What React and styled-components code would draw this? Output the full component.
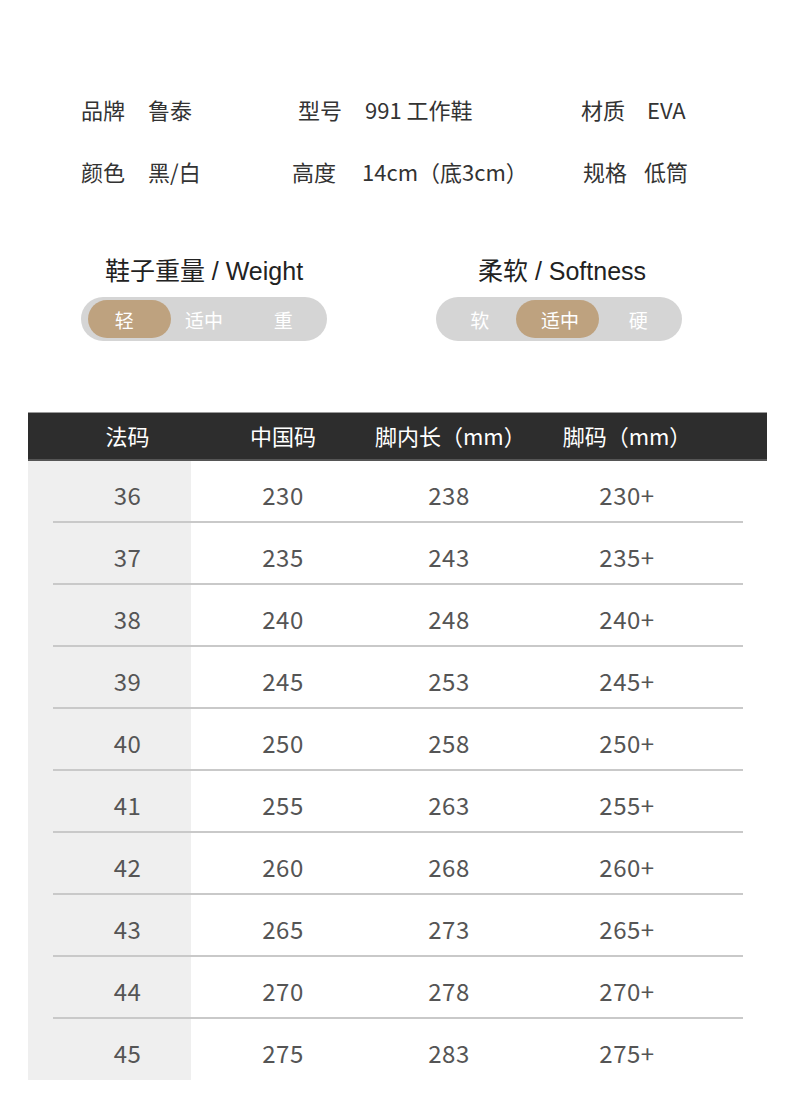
import React from "react";
import styled, { createGlobalStyle } from "styled-components";

const Global = createGlobalStyle`
  html, body { margin: 0; padding: 0; background: #fff; }
  body { font-family: "Noto Sans CJK SC", "Noto Sans", sans-serif; }
`;

const Page = styled.div`
  width: 790px;
  min-height: 1115px;
  background: #fff;
  padding-top: 78px;
  box-sizing: border-box;
`;

const Specs = styled.div`
  padding-left: 81px;
`;

const SpecRow = styled.div`
  display: grid;
  grid-template-columns: 211px 289px auto;
  height: 62px;
  align-items: center;
`;

const SpecCell = styled.div`
  display: flex;
  align-items: center;
  margin-left: ${(p) => p.$shift || 0}px;
  font-size: 22px;
  color: #333;
  white-space: nowrap;
`;

const SpecLabel = styled.span`
  margin-right: ${(p) => p.$gap || 23}px;
`;

const SpecValue = styled.span``;

const Ratings = styled.div`
  display: flex;
  padding-left: 81px;
  gap: 109px;
  margin-top: 54px;
`;

const Rating = styled.div`
  display: flex;
  flex-direction: column;
  align-items: center;
  width: 246px;
`;

const RatingTitle = styled.div`
  font-family: "Liberation Sans", "Noto Sans CJK SC", sans-serif;
  font-size: 25px;
  line-height: 30px;
  color: #222;
  margin-left: ${(p) => p.$shift || 0}px;
  white-space: nowrap;
`;

const Pill = styled.div`
  margin-top: 11px;
  width: 246px;
  height: 44px;
  border-radius: 22px;
  background: #d5d5d5;
  display: grid;
  grid-template-columns: repeat(3, minmax(0, 1fr));
  align-items: center;
  justify-items: center;
  padding: 0 4px;
  box-sizing: border-box;
`;

const PillOption = styled.div`
  flex: none;
  width: 83px;
  min-width: 83px;
  height: 38px;
  border-radius: 19px;
  background: ${(p) => (p.$active ? "#bea27f" : "transparent")};
  color: #fff;
  font-size: 19px;
  display: flex;
  align-items: center;
  justify-content: center;
  box-sizing: border-box;
  padding-left: ${(p) => p.$padL || 0}px;
  padding-right: ${(p) => p.$padR || 0}px;
  transform: translateX(${(p) => p.$nudge || 0}px);
`;

const Table = styled.div`
  margin-top: 71px;
  margin-left: 28px;
  width: 739px;
`;

const HeadRow = styled.div`
  display: grid;
  grid-template-columns: 163px 184px 148px 208px 36px;
  height: 49px;
  box-sizing: border-box;
  background: #2d2d2d;
  border-top: 1px solid #9a9a9a;
  border-bottom: 2px solid #555;
  align-items: center;
  padding-bottom: 3px;
`;

const HeadCell = styled.div`
  color: #fff;
  font-size: 22px;
  text-align: center;
  white-space: nowrap;
  padding-left: ${(p) => (p.$first ? "36px" : "0")};
`;

const Body = styled.div`
  background: linear-gradient(to right, #efefef 163px, #fff 163px);
  padding-bottom: 1px;
`;

const Row = styled.div`
  display: grid;
  grid-template-columns: 163px 184px 148px 208px 36px;
  height: 60px;
  padding-top: 6px;
  box-sizing: border-box;
  align-items: center;
`;

const Cell = styled.div`
  color: #555;
  font-size: 24px;
  text-align: center;
  letter-spacing: 0.5px;
  padding-left: ${(p) => (p.$first ? "36px" : "0")};
`;

const Divider = styled.div`
  height: 2px;
  margin: 0 24px 0 25px;
  background: #c9c9c9;
`;

const rows = [
  [36, 230, 238],
  [37, 235, 243],
  [38, 240, 248],
  [39, 245, 253],
  [40, 250, 258],
  [41, 255, 263],
  [42, 260, 268],
  [43, 265, 273],
  [44, 270, 278],
  [45, 275, 283],
];

export default function App() {
  return (
    <Page>
      <Global />
      <Specs>
        <SpecRow>
          <SpecCell>
            <SpecLabel>品牌</SpecLabel>
            <SpecValue>鲁泰</SpecValue>
          </SpecCell>
          <SpecCell $shift={6}>
            <SpecLabel>型号</SpecLabel>
            <SpecValue>991 工作鞋</SpecValue>
          </SpecCell>
          <SpecCell>
            <SpecLabel $gap={22}>材质</SpecLabel>
            <SpecValue>EVA</SpecValue>
          </SpecCell>
        </SpecRow>
        <SpecRow>
          <SpecCell>
            <SpecLabel>颜色</SpecLabel>
            <SpecValue>黑/白</SpecValue>
          </SpecCell>
          <SpecCell>
            <SpecLabel $gap={26}>高度</SpecLabel>
            <SpecValue>14cm（底3cm）</SpecValue>
          </SpecCell>
          <SpecCell $shift={2}>
            <SpecLabel $gap={17}>规格</SpecLabel>
            <SpecValue>低筒</SpecValue>
          </SpecCell>
        </SpecRow>
      </Specs>

      <Ratings>
        <Rating>
          <RatingTitle>鞋子重量 / Weight</RatingTitle>
          <Pill>
            <PillOption $active $nudge={5} $padR={11}>轻</PillOption>
            <PillOption>适中</PillOption>
            <PillOption>重</PillOption>
          </Pill>
        </Rating>
        <Rating>
          <RatingTitle $shift={6}>柔软 / Softness</RatingTitle>
          <Pill>
            <PillOption>软</PillOption>
            <PillOption $active $nudge={-2} $padL={6}>适中</PillOption>
            <PillOption>硬</PillOption>
          </Pill>
        </Rating>
      </Ratings>

      <Table>
        <HeadRow>
          <HeadCell $first>法码</HeadCell>
          <HeadCell>中国码</HeadCell>
          <HeadCell>脚内长（mm）</HeadCell>
          <HeadCell>脚码（mm）</HeadCell>
          <span />
        </HeadRow>
        <Body>
          {rows.map(([fr, cn, len], i) => (
            <React.Fragment key={fr}>
              <Row>
                <Cell $first>{fr}</Cell>
                <Cell>{cn}</Cell>
                <Cell>{len}</Cell>
                <Cell>{cn}+</Cell>
                <span />
              </Row>
              {i < rows.length - 1 && <Divider />}
            </React.Fragment>
          ))}
        </Body>
      </Table>
    </Page>
  );
}
